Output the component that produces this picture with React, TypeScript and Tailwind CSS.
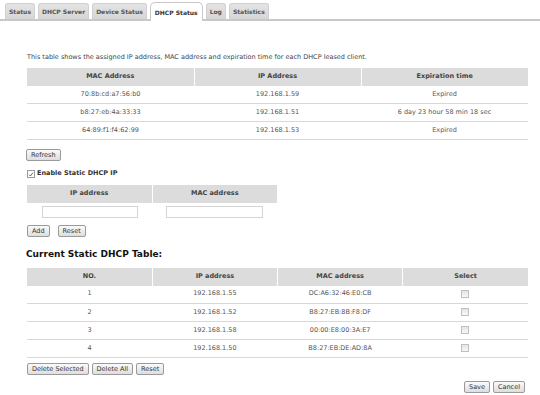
import React from 'react'

const tabs = ['Status', 'DHCP Server', 'Device Status', 'DHCP Status', 'Log', 'Statistics']

const leases = [
  { mac: '70:8b:cd:a7:56:b0', ip: '192.168.1.59', exp: 'Expired' },
  { mac: 'b8:27:eb:4a:33:33', ip: '192.168.1.51', exp: '6 day 23 hour 58 min 18 sec' },
  { mac: '64:89:f1:f4:62:99', ip: '192.168.1.53', exp: 'Expired' },
]

const statics = [
  { no: '1', ip: '192.168.1.55', mac: 'DC:A6:32:46:E0:CB' },
  { no: '2', ip: '192.168.1.52', mac: 'B8:27:EB:8B:F8:DF' },
  { no: '3', ip: '192.168.1.58', mac: '00:00:E8:00:3A:E7' },
  { no: '4', ip: '192.168.1.50', mac: 'B8:27:EB:DE:AD:8A' },
]

function Btn({ children }: { children: React.ReactNode }) {
  return (
    <button className="h-[12px] px-[4px] border border-[#9a9a9a] rounded-[2px] bg-gradient-to-b from-[#fafafa] to-[#dedede] text-[6.5px] leading-[10px] text-[#333]">
      {children}
    </button>
  )
}

function Box() {
  return <span className="inline-block w-[8px] h-[8px] border border-[#c0c0c0] bg-gradient-to-b from-[#e4e4e4] to-[#f8f8f8]" />
}

function Th({ children }: { children: React.ReactNode }) {
  return (
    <th className="h-[18px] bg-[#dcdcdc] border-l border-r border-white font-bold text-[#444] text-center first:border-l-0 last:border-r-0">
      {children}
    </th>
  )
}

function Td({ children }: { children: React.ReactNode }) {
  return <td className="h-[18px] border-b border-[#d8d8d8] text-center text-[#555]">{children}</td>
}

export default function App() {
  return (
    <div className="w-[540px] h-[395px] bg-white text-[6.5px] text-[#444] overflow-hidden" style={{ fontFamily: '"DejaVu Sans", Verdana, sans-serif' }}>
      {/* Tabs */}
      <div className="flex items-end gap-[3px] pl-[5px] h-[21px] border-b-2 border-[#c8c8c8] text-[6px]">
        {tabs.map((t) =>
          t === 'DHCP Status' ? (
            <div key={t} className="h-[19px] -mb-[2px] px-[4px] flex items-center bg-white border border-b-0 border-[#c8c8c8] rounded-t-[5px] font-bold text-[#333]">
              {t}
            </div>
          ) : (
            <div key={t} className="h-[16px] px-[3px] flex items-center bg-gradient-to-b from-[#e4e4e4] to-[#d6d6d6] border border-b-0 border-[#d0d0d0] rounded-t-[3px] font-bold text-[#555]">
              {t}
            </div>
          )
        )}
      </div>

      <div className="px-[27px]">
        <p className="mt-[32px] text-[#444]">This table shows the assigned IP address, MAC address and expiration time for each DHCP leased client.</p>

        <table className="mt-[5px] w-[501px] border-collapse table-fixed">
          <thead>
            <tr>
              <Th>MAC Address</Th>
              <Th>IP Address</Th>
              <Th>Expiration time</Th>
            </tr>
          </thead>
          <tbody>
            {leases.map((l) => (
              <tr key={l.mac}>
                <Td>{l.mac}</Td>
                <Td>{l.ip}</Td>
                <Td>{l.exp}</Td>
              </tr>
            ))}
          </tbody>
        </table>

        <div className="mt-[9px] -ml-[1px]">
          <Btn>Refresh</Btn>
        </div>

        <label className="mt-[8px] flex items-center gap-[2px] font-bold text-[#333]">
          <span className="w-[8px] h-[8px] border border-[#9a9a9a] bg-white flex items-center justify-center">
            <svg viewBox="0 0 8 8" className="w-[7px] h-[7px]"><path d="M1.5 4.2 L3.2 6 L6.6 1.6" fill="none" stroke="#444" strokeWidth="1.1" /></svg>
          </span>
          Enable Static DHCP IP
        </label>

        <table className="mt-[6px] w-[250px] border-collapse table-fixed">
          <thead>
            <tr>
              <Th>IP address</Th>
              <Th>MAC address</Th>
            </tr>
          </thead>
          <tbody>
            <tr>
              <td className="h-[18px] text-center"><input className="w-[96px] h-[12px] border border-[#d4d4d4] align-middle" /></td>
              <td className="h-[18px] text-center"><input className="w-[97px] h-[12px] border border-[#d4d4d4] align-middle" /></td>
            </tr>
          </tbody>
        </table>

        <div className="mt-[4px] flex gap-[8px]">
          <Btn>Add</Btn>
          <Btn>Reset</Btn>
        </div>

        <h2 className="mt-[11px] -ml-[1px] text-[9px] font-bold text-[#111]">Current Static DHCP Table:</h2>

        <table className="mt-[6px] w-[501px] border-collapse table-fixed">
          <thead>
            <tr>
              <Th>NO.</Th>
              <Th>IP address</Th>
              <Th>MAC address</Th>
              <Th>Select</Th>
            </tr>
          </thead>
          <tbody>
            {statics.map((s) => (
              <tr key={s.no}>
                <Td>{s.no}</Td>
                <Td>{s.ip}</Td>
                <Td>{s.mac}</Td>
                <Td><span className="inline-flex align-middle"><Box /></span></Td>
              </tr>
            ))}
          </tbody>
        </table>

        <div className="mt-[5px] flex gap-[3px]">
          <Btn>Delete Selected</Btn>
          <Btn>Delete All</Btn>
          <Btn>Reset</Btn>
        </div>

        <div className="mt-[6px] flex justify-end gap-[3px] -mr-[12px]">
          <Btn>Save</Btn>
          <Btn>Cancel</Btn>
        </div>
      </div>
    </div>
  )
}
